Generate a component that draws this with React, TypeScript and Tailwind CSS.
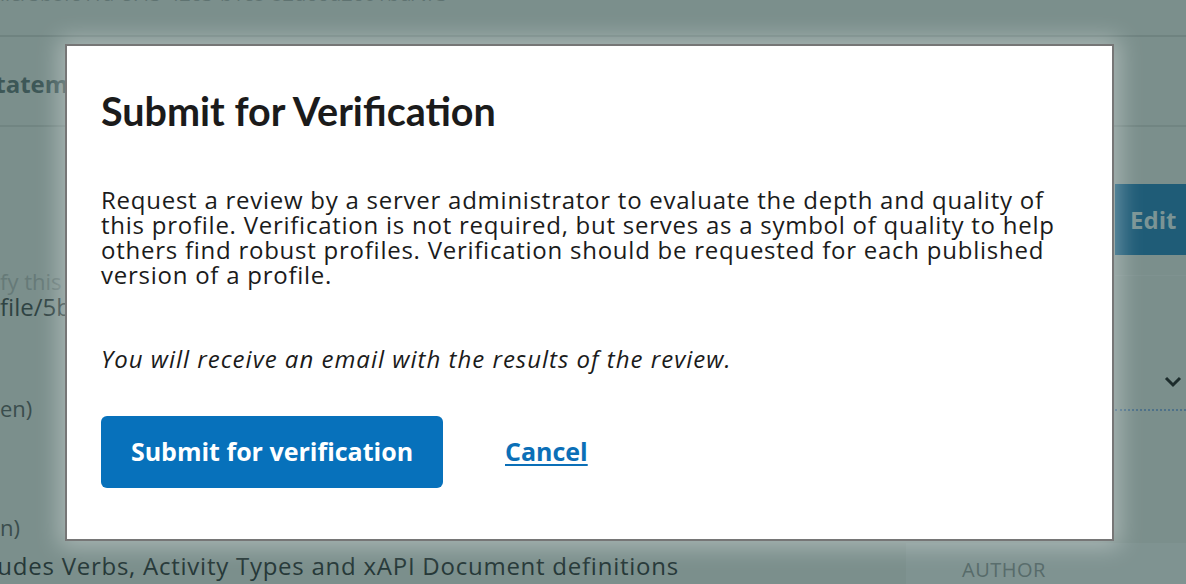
import React from "react";

const font = { fontFamily: "'Open Sans', 'Noto Sans', sans-serif" };
const headingFont = { fontFamily: "Lato, 'Open Sans', sans-serif" };

function BackgroundPage() {
  return (
    <div className="flex h-[584px] w-full flex-col overflow-hidden bg-[#7b8f8c] text-[#2c3f3f]">
      <div className="h-[37px] shrink-0 overflow-hidden border-b-2 border-[#6f8380]">
        <p className="-mt-[21px] whitespace-nowrap text-[20px] text-[#5f7371]">
          ile/5b8fc41a-e7f3-4263-b1c8-82d66d2601bd/v/3
        </p>
      </div>
      <div className="flex h-[90px] shrink-0 items-center border-b-2 border-[#718582]">
        <span className="-ml-[18px] mt-[6px] text-[24px] font-bold text-[#3d5757]">Statements</span>
      </div>
      <div className="flex h-[416px] shrink-0">
        <div className="flex flex-1 flex-col">
          <p className="mt-[141px] whitespace-nowrap text-[22px] leading-[26px] text-[#667a78]">
            fy this profile
          </p>
          <p className="whitespace-nowrap text-[24px] leading-[26px] text-[#2f4343]">file/5b8fc41a</p>
          <p className="mt-[75px] text-[22px] leading-[26px] text-[#3a4d4d]">en)</p>
          <p className="mt-[93px] text-[22px] leading-[26px] text-[#3a4d4d]">n)</p>
        </div>
        <div className="flex w-[71px] flex-col">
          <div className="mt-[57px] flex h-[71px] items-center bg-[#1f5c77] pl-[15px]">
            <span className="text-[24px] font-bold text-[#7b9495]">Edit</span>
          </div>
          <div className="mt-[20px] h-px bg-[#7f9290]" />
          <div className="mt-[100px] flex justify-end pr-[4px]">
            <svg width="18" height="12" viewBox="0 0 18 12" fill="none">
              <path d="M2 2l7 7 7-7" stroke="#1d2c2c" strokeWidth="3" />
            </svg>
          </div>
          <div className="mt-[21px] border-b-2 border-dotted border-[#4e7189]" />
        </div>
      </div>
      <div className="flex h-[41px] shrink-0">
        <p className="-ml-[44px] mt-[10px] flex-1 whitespace-nowrap text-[24px] leading-[26px] tracking-[0.75px] text-[#263838]">
          includes Verbs, Activity Types and xAPI Document definitions
        </p>
        <div className="w-[280px] bg-[#7f9391] pl-[56px] pt-[12px]">
          <span className="text-[20px] tracking-wide text-[#576b6a]">AUTHOR</span>
        </div>
      </div>
    </div>
  );
}

export default function App() {
  return (
    <div className="relative h-[584px] w-[1186px] overflow-hidden" style={font}>
      <BackgroundPage />
      <div className="absolute inset-0 pl-[65px] pt-[44px]">
        <div className="flex h-[497px] w-[1049px] flex-col border-2 border-[#767676] bg-white px-[34px] text-[#1b1b1b] shadow-[0_0_22px_6px_rgba(255,255,255,0.35)]">
          <h1 className="mt-[45px] text-[39.5px] font-bold leading-[40px]" style={headingFont}>
            Submit for Verification
          </h1>
          <p className="mt-[56px] text-[24px] leading-[25px] tracking-[0.75px]">
            Request a review by a server administrator to evaluate the depth and quality of this
            profile. Verification is not required, but serves as a symbol of quality to help
            others find robust profiles. Verification should be requested for each published
            version of a profile.
          </p>
          <p className="mt-[59px] text-[24px] italic leading-[25px] tracking-[1px]">
            You will receive an email with the results of the review.
          </p>
          <div className="mt-[45px] flex items-center gap-[62px]">
            <button className="h-[72px] w-[342px] rounded-[6px] bg-[#0771bb] text-[25px] font-bold text-white">
              Submit for verification
            </button>
            <a href="#" className="text-[25px] font-bold text-[#0b6fb7] underline underline-offset-[3px]">
              Cancel
            </a>
          </div>
        </div>
      </div>
    </div>
  );
}
